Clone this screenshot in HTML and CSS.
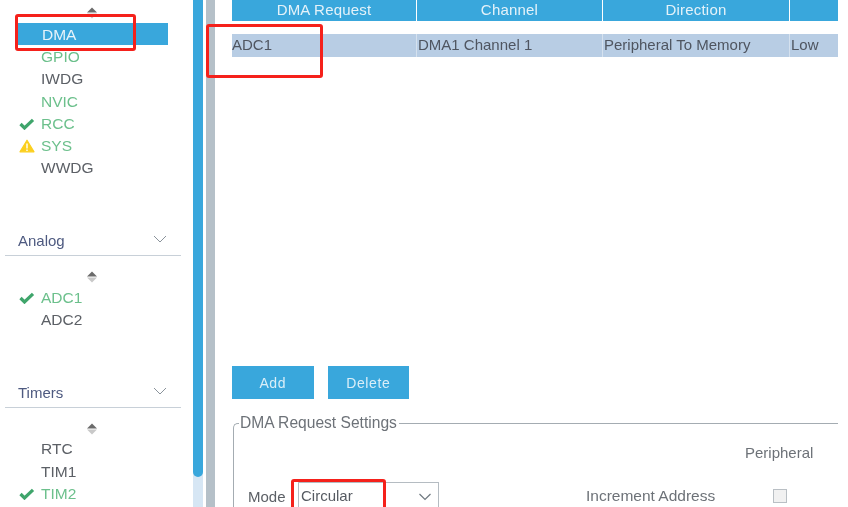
FILE: index.html
```html
<!DOCTYPE html>
<html lang="en">
<head>
<meta charset="utf-8">
<title>DMA Configuration</title>
<link rel="stylesheet" href="styles.css">
</head>
<body>
<div class="app">
  <aside class="sidebar">
    <div class="sort sort-top"><svg width="12" height="12" viewBox="0 0 12 12"><path d="M6 0.5 11 5.5H1Z" fill="#6b6b6b"/><path d="M6 11.5 1 6.5H11Z" fill="#c9c9c9"/></svg></div>
    <ul class="list">
      <li class="item active"><span class="ico"></span>DMA</li>
      <li class="item ok"><span class="ico"></span>GPIO</li>
      <li class="item"><span class="ico"></span>IWDG</li>
      <li class="item ok"><span class="ico"></span>NVIC</li>
      <li class="item ok"><span class="ico"><svg width="16" height="12" viewBox="0 0 16 12"><path d="M1.5 6 5.5 10 14 1.8" fill="none" stroke="#3fa56b" stroke-width="3.2"/></svg></span>RCC</li>
      <li class="item ok"><span class="ico"><svg width="16" height="14" viewBox="0 0 16 14"><path d="M8 1.2 15 12.8H1Z" fill="#fbcf1e" stroke="#fbcf1e" stroke-width="1.2" stroke-linejoin="round"/><rect x="7.3" y="4.5" width="1.4" height="5" fill="#fff"/><rect x="7.3" y="10.5" width="1.4" height="1.5" fill="#fff"/></svg></span>SYS</li>
      <li class="item"><span class="ico"></span>WWDG</li>
    </ul>
    <div class="group analog">
      <span>Analog</span>
      <svg class="chev" width="14" height="8" viewBox="0 0 14 8"><path d="M1 1 7 7 13 1" fill="none" stroke="#8a939b" stroke-width="1"/></svg>
    </div>
    <div class="sort"><svg width="12" height="12" viewBox="0 0 12 12"><path d="M6 0.5 11 5.5H1Z" fill="#6b6b6b"/><path d="M6 11.5 1 6.5H11Z" fill="#c9c9c9"/></svg></div>
    <ul class="list">
      <li class="item ok"><span class="ico"><svg width="16" height="12" viewBox="0 0 16 12"><path d="M1.5 6 5.5 10 14 1.8" fill="none" stroke="#3fa56b" stroke-width="3.2"/></svg></span>ADC1</li>
      <li class="item"><span class="ico"></span>ADC2</li>
    </ul>
    <div class="group timers">
      <span>Timers</span>
      <svg class="chev" width="14" height="8" viewBox="0 0 14 8"><path d="M1 1 7 7 13 1" fill="none" stroke="#8a939b" stroke-width="1"/></svg>
    </div>
    <div class="sort"><svg width="12" height="12" viewBox="0 0 12 12"><path d="M6 0.5 11 5.5H1Z" fill="#6b6b6b"/><path d="M6 11.5 1 6.5H11Z" fill="#c9c9c9"/></svg></div>
    <ul class="list">
      <li class="item"><span class="ico"></span>RTC</li>
      <li class="item"><span class="ico"></span>TIM1</li>
      <li class="item ok"><span class="ico"><svg width="16" height="12" viewBox="0 0 16 12"><path d="M1.5 6 5.5 10 14 1.8" fill="none" stroke="#3fa56b" stroke-width="3.2"/></svg></span>TIM2</li>
    </ul>
  </aside>
  <div class="scrollbar"><div class="thumb"></div></div>
  <div class="divider"></div>
  <main class="main">
    <div class="grid-row head">
      <div class="cell">DMA Request</div>
      <div class="cell">Channel</div>
      <div class="cell">Direction</div>
      <div class="cell"></div>
    </div>
    <div class="grid-row body-row">
      <div class="cell">ADC1</div>
      <div class="cell">DMA1 Channel 1</div>
      <div class="cell">Peripheral To Memory</div>
      <div class="cell">Low</div>
    </div>
    <div class="actions">
      <button class="btn">Add</button>
      <button class="btn">Delete</button>
    </div>
    <fieldset class="settings">
      <legend>DMA Request Settings</legend>
      <div class="peripheral">Peripheral</div>
      <div class="settings-row">
        <label class="mode-label">Mode</label>
        <div class="select">Circular
          <svg class="select-chev" width="14" height="8" viewBox="0 0 14 8"><path d="M1.5 1 7 6.5 12.5 1" fill="none" stroke="#6f7980" stroke-width="1.2"/></svg>
        </div>
        <span class="inc-label">Increment Address</span>
        <span class="check"></span>
      </div>
    </fieldset>
  </main>
</div>
<div class="mark mark-dma"></div>
<div class="mark mark-adc"></div>
<div class="mark mark-mode"></div>
</body>
</html>
```
FILE: styles.css
```css
* { box-sizing: border-box; }
html, body { margin: 0; padding: 0; background: #fff; }
body {
  position: relative;
  width: 848px;
  height: 507px;
  overflow: hidden;
  font-family: "Liberation Sans", Arial, sans-serif;
  font-size: 15px;
  color: #5c6066;
  filter: blur(0.35px);
}
.app { display: flex; height: 507px; overflow: hidden; }

.sidebar { width: 193px; flex: none; padding: 7px 0 0 5px; }
.sort { display: flex; justify-content: center; height: 12px; width: 174px; }
.sort-top { margin-bottom: 4px; }
.list { list-style: none; margin: 0; padding: 0; font-size: 15.5px; }
.item {
  display: flex;
  align-items: center;
  height: 22.3px;
  width: 151px;
  margin-left: 12px;
  padding-left: 2px;
  padding-top: 1px;
}
.ico { width: 22px; flex: none; display: flex; align-items: center; }
.item.ok { color: #6cc08c; }
.item.active { background: #39a7dc; color: #e6f3fa; padding-left: 3px; }
.group {
  display: flex;
  justify-content: space-between;
  align-items: center;
  width: 176px;
  height: 24px;
  padding: 0 14px 6px 13px;
  border-bottom: 1px solid #c8d0d8;
  color: #4e5a80;
  margin-bottom: 15px;
}
.chev { margin-bottom: 3px; }
.analog { margin-top: 53px; }
.timers { margin-top: 53px; }
.group + .sort { margin-bottom: 3px; }

.scrollbar { width: 10px; flex: none; background: #d6e6f4; }
.thumb { height: 477px; background: #39a7dc; border-radius: 0 0 5px 5px; }
.divider { width: 9px; flex: none; margin-left: 3px; background: #b5c0c8; }

.main { width: 623px; flex: none; padding-left: 17px; display: flex; flex-direction: column; }
.main > * { flex: none; }
.grid-row { display: grid; grid-template-columns: 185px 186px 187px 48px; width: 606px; }
.head { height: 21px; }
.head .cell {
  background: #39a7dc;
  color: #e4f2f9;
  text-align: center;
  margin-right: 1px;
  line-height: 20px;
  letter-spacing: 0.2px;
}
.head .cell:last-child { margin-right: 0; }
.body-row { height: 23px; margin-top: 13px; background: #b8cde4; }
.body-row .cell { line-height: 21px; padding-left: 1px; border-right: 1px solid #d5e1ee; color: #4f5560; }
.body-row .cell:first-child { padding-left: 0; }
.body-row .cell:last-child { border-right: 0; }

.actions { display: flex; gap: 14px; margin-top: 309px; }
.btn {
  width: 81.5px;
  height: 33px;
  border: 0;
  padding: 0;
  background: #39a7dc;
  color: #d9eef8;
  font: inherit;
  font-size: 14px;
  letter-spacing: 0.6px;
}
.settings {
  margin: 15px 0 0 1px;
  width: 605px;
  padding: 0 0 0 14px;
  border: 0;
  border-top: 1px solid #a4acb2;
  border-left: 1px solid #a4acb2;
  border-top-left-radius: 5px;
  min-height: 100px;
}
.settings legend { padding: 0 2px 0 1px; margin-left: -9px; color: #6d7278; font-size: 15.6px; }
.peripheral { margin-left: 497px; line-height: 18px; margin-top: 12px; color: #6d7278; }
.settings-row { display: flex; align-items: center; margin-top: 20px; height: 28px; }
.mode-label { width: 50px; }
.select {
  position: relative;
  width: 141px;
  height: 28px;
  border: 1px solid #b5bcc2;
  padding-left: 2px;
  line-height: 26px;
  color: #565b62;
}
.select-chev { position: absolute; right: 6px; top: 10px; }
.inc-label { margin-left: 147px; width: 187px; color: #6d7278; font-size: 15.5px; }
.check { width: 14px; height: 14px; border: 1px solid #b9bfc4; background: #f1f1f1; }

.mark { position: absolute; border: 3px solid #f5211b; border-radius: 3px; }
.mark-dma { left: 15px; top: 14px; width: 121px; height: 37px; }
.mark-adc { left: 206px; top: 24px; width: 117px; height: 54px; }
.mark-mode { left: 291px; top: 479px; width: 95px; height: 40px; }
```
